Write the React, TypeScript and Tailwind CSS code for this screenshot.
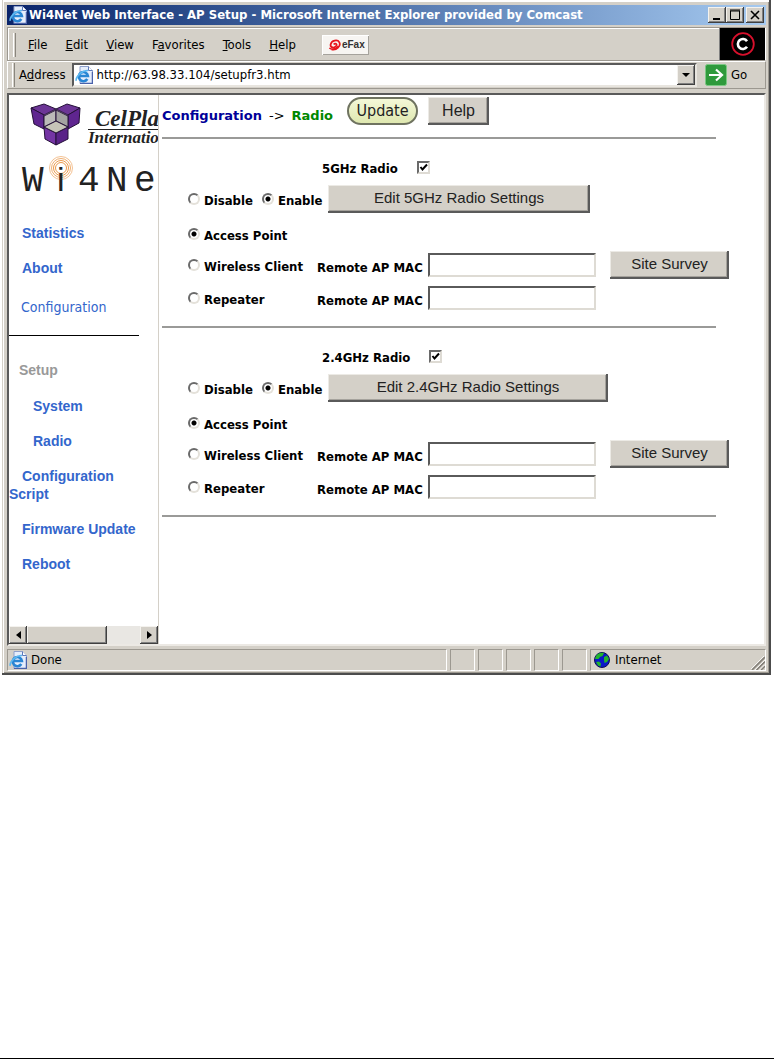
import React, { useState } from 'react'

const raised = 'bg-[#d4d0c8] shadow-[inset_-1px_-1px_0_#404040,inset_1px_1px_0_#f4f2ee,inset_-2px_-2px_0_#808080]';
const winButton = 'bg-[#d4d0c8] text-[#222] shadow-[inset_-2px_-2px_0_#5a5a5a,inset_1px_1px_0_#eceae5,inset_-3px_-3px_0_#a5a29c]';
const sunken = 'border border-t-[#9c9890] border-l-[#9c9890] border-b-white border-r-white';
const textBox = 'h-6 w-[168px] border-2 border-t-[#5a5a5a] border-l-[#5a5a5a] border-b-[#dedbd4] border-r-[#dedbd4] bg-white px-1 text-[13px] outline-none';

function PageIcon({ size }: { size: string }) {
  return (
    <svg viewBox="0 0 18 18" className={size}>
      <path d="M5 .5h8.500l4 4v13H5z" fill="#e6eefc" stroke="#8ea0cc" />
      <path d="M13.500.5v4h4" fill="#fff" stroke="#5d78b8" />
      <path d="M5 17.500h12.500V6" fill="none" stroke="#4a62aa" strokeWidth="1.500" />
      <path d="M12.300 13a4.600 4.600 0 1 1 .6-3H5" fill="none" stroke="#2a86d4" strokeWidth="2.600" />
      <path d="M1.200 14.800C.3 11 7 4.300 13 4.600" fill="none" stroke="#5cb8f0" strokeWidth="1.500" />
    </svg>
  )
}

function Grip() {
  return <div className="h-[24px] w-[3px] shrink-0 border-l border-r border-l-white border-r-[#8a867e]" />
}

function TitleBar() {
  return (
    <div className="flex h-5 items-center bg-linear-to-r from-[#0a246a] to-[#a6caf0] pl-0.5 pr-0.5">
      <PageIcon size="h-[18px] w-[18px] shrink-0" />
      <h1 className="ml-0.5 grow whitespace-nowrap text-[13px] font-bold text-white">
        Wi4Net Web Interface - AP Setup - Microsoft Internet Explorer provided by Comcast
      </h1>
      <button aria-label="Minimize" className={`flex h-4 w-[18px] items-center justify-center ${raised}`}>
        <svg viewBox="0 0 18 16" className="h-4 w-[18px]"><path d="M5 12h7" stroke="#000" strokeWidth="2" /></svg>
      </button>
      <button aria-label="Maximize" className={`flex h-4 w-[18px] items-center justify-center ${raised}`}>
        <svg viewBox="0 0 18 16" className="h-4 w-[18px]"><path d="M4 3h10M4 4h10M4.500 4v8.500h9V4" fill="none" stroke="#000" /></svg>
      </button>
      <button aria-label="Close" className={`ml-0.5 flex h-4 w-[18px] items-center justify-center ${raised}`}>
        <svg viewBox="0 0 18 16" className="h-4 w-[18px]"><path d="M5 4l8 8M13 4l-8 8" stroke="#000" strokeWidth="1.600" /></svg>
      </button>
    </div>
  )
}

function MenuBar() {
  return (
    <div className="mt-0.5 flex border border-[#9c9890] border-r-white">
      <div className="flex h-8 grow items-center gap-[18px] border-t border-l border-white pl-1 text-[13px]">
        <Grip />
        <button className="-ml-1.5"><u>F</u>ile</button>
        <button><u>E</u>dit</button>
        <button><u>V</u>iew</button>
        <button>F<u>a</u>vorites</button>
        <button><u>T</u>ools</button>
        <button><u>H</u>elp</button>
        <button aria-label="eFax" className="ml-2 flex h-5 w-[47px] items-center bg-[#f7f5f2] pl-1.5 shadow-[inset_1px_1px_0_#fff,inset_-1px_-1px_0_#a5a29c]">
          <svg viewBox="0 0 16 14" className="h-[13px] w-[14px] shrink-0">
            <path d="M4 12.500C10 14 15 8.500 13 4.500 11 1 4 2 3 7c-.6 4 4.500 4.500 6.500 1.500 1.300-2.200-1.500-3.200-3-1.500" fill="none" stroke="#e8141c" strokeWidth="2" />
            <path d="M1.500 11c3 2.500 8 1 10-2" fill="none" stroke="#e8141c" strokeWidth="1.600" />
          </svg>
          <span className="font-['Liberation_Sans',sans-serif] text-[10px] font-bold text-[#333]">eFax</span>
        </button>
      </div>
      <div className="flex w-[46px] items-center justify-center border-l border-[#808080] bg-black">
        <svg viewBox="0 0 24 24" className="h-6 w-6">
          <circle cx="12" cy="12" r="10.800" fill="none" stroke="#d8102c" strokeWidth="1.800" />
          <path d="M16 9.200a5 5 0 1 0 0 5.600" fill="none" stroke="#fff" strokeWidth="2.600" />
        </svg>
      </div>
    </div>
  )
}

function AddressBar() {
  const [url, setUrl] = useState('http://63.98.33.104/setupfr3.htm');

  return (
    <div className="flex h-7 items-center border border-t-white border-l-white border-b-[#9c9890] border-r-[#9c9890] pl-1 text-[13px]">
      <Grip />
      <label htmlFor="address" className="ml-1 mr-1.5">A<u>d</u>dress</label>
      <div className="flex h-6 grow items-center border-2 border-t-[#5a5a5a] border-l-[#5a5a5a] border-b-[#e8e5df] border-r-[#e8e5df] bg-white pl-px">
        <PageIcon size="h-[18px] w-[18px] shrink-0" />
        <input id="address" value={url} onChange={(e) => setUrl(e.target.value)} className="ml-1 min-w-0 grow outline-none" />
        <button aria-label="Show addresses" className={`flex h-5 w-[18px] items-center justify-center ${raised}`}>
          <svg viewBox="0 0 8 4" className="h-1 w-2"><path d="M0 0h8L4 4z" /></svg>
        </button>
      </div>
      <button className="ml-2 flex w-[60px] items-center gap-1">
        <svg viewBox="0 0 22 22" className="h-[22px] w-[22px]">
          <rect x=".5" y=".5" width="21" height="21" rx="2" fill="#2f9a3c" stroke="#7cc884" />
          <path d="M4 11h12M11 5.500l6 5.500-6 5.500" fill="none" stroke="#fff" strokeWidth="2.200" />
        </svg>
        Go
      </button>
    </div>
  )
}

function Logos() {
  return (
    <svg viewBox="0 0 149 105" className="h-[105px] w-[149px] shrink-0">
      <g stroke="#241038" strokeWidth="1" strokeLinejoin="round">
        <path d="M22 13l13-4 12 5-12 6z" fill="#6c3596" />
        <path d="M22 13l13 7v14l-10-5z" fill="#5f2590" />
        <path d="M71 13l-13-4-11 5 12 6z" fill="#6c3596" />
        <path d="M71 13l-12 7v14l11-6z" fill="#5f2590" />
        <path d="M35 32l12 6v12l-11-6z" fill="#7434a4" />
        <path d="M59 32l-12 6v12l12-6z" fill="#5a2288" />
        <path d="M47 15l-12 6v11l12-6z" fill="#bbbab8" />
        <path d="M47 15l12 6v11l-12-6z" fill="#a4a3a2" />
        <path d="M47 26l-12 6 12 6 12-6z" fill="#c6c4b8" />
      </g>
      <g fill="#222" fontFamily="Liberation Serif, serif" fontStyle="italic" fontWeight="bold">
        <text x="86" y="31" fontSize="23">CelPlan</text>
        <text x="79" y="48" fontSize="17">International</text>
      </g>
      <path d="M79 34.500h70" stroke="#222" />
      <g fill="none" stroke="#eb9a4c">
        <circle cx="52" cy="73" r="11.500" strokeWidth="1" opacity=".6" />
        <circle cx="52" cy="73" r="9.500" strokeWidth="1" opacity=".8" />
        <circle cx="52" cy="73" r="7.500" strokeWidth="1" />
        <circle cx="52" cy="73" r="5.500" strokeWidth="1" fill="#fff" />
      </g>
      <g fill="#222" fontFamily="Liberation Mono, monospace" fontSize="36">
        <text x="13" y="96">W</text>
        <text x="48" y="96" fontFamily="Liberation Sans, sans-serif" fontSize="34">i</text>
        <text x="69" y="96">4</text>
        <text x="97" y="96">N</text>
        <text x="125" y="96">e</text>
      </g>
    </svg>
  )
}

function Sidebar() {
  return (
    <aside className="flex w-[150px] shrink-0 flex-col overflow-hidden border-r border-[#d4d0c8]">
      <Logos />
      <nav className="mt-6 flex flex-col gap-[17px] pb-[53px] font-['Liberation_Sans',sans-serif] text-[14px] leading-[18px] font-bold text-[#3366cc]">
        <a href="#statistics" className="pl-[13px]">Statistics</a>
        <a href="#about" className="pl-[13px]">About</a>
        <a href="#configuration" className="mt-1 pl-3 font-['DejaVu_Sans_Condensed','DejaVu_Sans',sans-serif] font-normal">Configuration</a>
        <hr className="mt-0.5 mr-[19px] border-black" />
        <span className="mt-2 pl-2.5 text-[#999]">Setup</span>
        <a href="#system" className="mt-px pl-6">System</a>
        <a href="#radio" className="pl-6">Radio</a>
        <a href="#script" className="pr-9 indent-[13px]">Configuration Script</a>
        <a href="#firmware" className="pl-[13px]">Firmware Update</a>
        <a href="#reboot" className="pl-[13px]">Reboot</a>
      </nav>
      <div className="mt-auto flex h-[18px] bg-[#e9e7e3]">
        <button aria-label="Scroll left" className={`flex w-[18px] items-center justify-center ${raised}`}>
          <svg viewBox="0 0 5 8" className="h-2 w-[5px]"><path d="M5 0v8L0 4z" /></svg>
        </button>
        <div className={`w-20 ${raised}`} />
        <button aria-label="Scroll right" className={`ml-auto flex w-[18px] items-center justify-center ${raised}`}>
          <svg viewBox="0 0 5 8" className="h-2 w-[5px]"><path d="M0 0v8l5-4z" /></svg>
        </button>
      </div>
    </aside>
  )
}

interface RadioOptionProps {
  name: string;
  label: string;
  checked?: boolean;
}

function RadioOption({ name, label, checked }: RadioOptionProps) {
  return (
    <label className="flex items-center gap-1 whitespace-nowrap">
      <input type="radio" name={name} defaultChecked={checked} className="h-3 w-3 appearance-none rounded-full border-2 border-t-[#6a6a6a] border-l-[#6a6a6a] border-b-[#e4e1da] border-r-[#e4e1da] bg-white checked:bg-[radial-gradient(circle,#000_2px,#fff_3px)]" />
      <span className="pt-1">{label}</span>
    </label>
  )
}

interface RadioSectionProps {
  id: string;
  band: string;
  editClass: string;
}

function RadioSection({ id, band, editClass }: RadioSectionProps) {
  return (
    <section className="pt-3.5 pb-3.5 pl-7">
      <div className="mb-1 flex h-7 items-center gap-[19px] pl-[134px]">
        <label htmlFor={`${id}-on`} className="pt-1">{band} Radio</label>
        <span className="relative flex">
          <input id={`${id}-on`} type="checkbox" defaultChecked className="peer h-[13px] w-[13px] appearance-none border-2 border-t-[#6a6a6a] border-l-[#6a6a6a] border-b-[#dedbd4] border-r-[#dedbd4] bg-white" />
          <svg viewBox="0 0 13 13" className="pointer-events-none absolute inset-0 hidden h-[13px] w-[13px] peer-checked:block">
            <path d="M3.500 6l2 2.500 4.500-5" fill="none" stroke="#000" strokeWidth="2" />
          </svg>
        </span>
      </div>
      <div className="flex h-7 items-center">
        <div className="flex w-[140px] gap-[9px]">
          <RadioOption name={`${id}-state`} label="Disable" />
          <RadioOption name={`${id}-state`} label="Enable" checked />
        </div>
        <button className={`h-7 pb-0.5 font-['Liberation_Sans',sans-serif] text-[15px] font-normal ${editClass} ${winButton}`}>Edit {band} Radio Settings</button>
      </div>
      <div className="mt-1.5 flex h-[30px] items-center">
        <RadioOption name={`${id}-mode`} label="Access Point" checked />
      </div>
      <div className="mt-0.5 flex h-7 items-center">
        <div className="w-[129px]"><RadioOption name={`${id}-mode`} label="Wireless Client" /></div>
        <label htmlFor={`${id}-client-mac`} className="w-[111px] pt-1.5 whitespace-nowrap">Remote AP MAC</label>
        <input id={`${id}-client-mac`} className={textBox} />
        <button className={`ml-3.5 h-7 w-[119px] pb-0.5 font-['Liberation_Sans',sans-serif] text-[15px] font-normal ${winButton}`}>Site Survey</button>
      </div>
      <div className="mt-[5px] flex h-7 items-center">
        <div className="w-[129px]"><RadioOption name={`${id}-mode`} label="Repeater" /></div>
        <label htmlFor={`${id}-repeater-mac`} className="w-[111px] pt-1.5 whitespace-nowrap">Remote AP MAC</label>
        <input id={`${id}-repeater-mac`} className={textBox} />
      </div>
    </section>
  )
}

function Divider() {
  return <hr className="ml-0.5 mr-12 h-0.5 border-0 bg-[#9a9a98]" />
}

function RadioPage() {
  return (
    <main className="min-w-0 grow pl-px text-[13px] leading-4 font-bold">
      <header className="flex h-[42px] items-center pb-2.5 pl-0.5">
        <h2 className="flex gap-[7px] pt-2.5 font-['DejaVu_Sans',sans-serif] whitespace-nowrap">
          <span className="text-[#000099]">Configuration</span>
          <span className="font-normal">-&gt;</span>
          <span className="text-[#008800]">Radio</span>
        </h2>
        <button className="ml-3.5 h-7 w-[71px] rounded-full border-2 border-[#6f7360] bg-linear-to-b from-[#f4f8d8] to-[#dfe8b0] text-[16px] font-normal text-[#222]">Update</button>
        <button className={`ml-2.5 h-7 w-[61px] font-['Liberation_Sans',sans-serif] text-[16px] font-normal ${winButton}`}>Help</button>
      </header>
      <Divider />
      <RadioSection id="radio5" band="5GHz" editClass="w-[262px]" />
      <Divider />
      <RadioSection id="radio24" band="2.4GHz" editClass="w-[280px]" />
      <Divider />
    </main>
  )
}

function StatusBar() {
  return (
    <footer className="mt-[3px] flex h-[22px] gap-[3px] text-[13px]">
      <div className={`flex grow items-center gap-1 pl-px ${sunken}`}>
        <PageIcon size="h-[18px] w-[18px]" />
        Done
      </div>
      {[1, 2, 3, 4, 5].map((n) => <div key={n} className={`w-[25px] ${sunken}`} />)}
      <div className={`flex w-[176px] items-center gap-[5px] pl-[3px] ${sunken}`}>
        <svg viewBox="0 0 16 16" className="h-4 w-4">
          <circle cx="8" cy="8" r="7.500" fill="#0a18c8" stroke="#101050" />
          <path d="M2 4c2-3 5-3.500 8-3L8.500 4 6 5 4.500 7 1 7zM10 5l3-1.500L15 7l-2 3-2.500 1-.5-3zM2 10l3-.5 2 2L6.500 14.500 4 13.500z" fill="#22b52c" />
        </svg>
        <span className="grow">Internet</span>
        <svg viewBox="0 0 14 14" className="h-3.5 w-3.5 self-end">
          <path d="M1 14L14 1M5.500 14L14 5.500M10 14l4-4" stroke="#85817a" strokeWidth="1.600" />
          <path d="M0 13L13 0M4 14L14 4M8.500 14L14 8.500" stroke="#fff" strokeWidth=".8" />
        </svg>
      </div>
    </footer>
  )
}

export default function App() {
  return (
    <div className="flex min-h-screen flex-col border-b border-black bg-white font-['DejaVu_Sans_Condensed','DejaVu_Sans',sans-serif] text-black">
      <div className="mr-[3px] ml-0.5 bg-[#d4d0c8] p-[5px] pb-1 shadow-[inset_-2px_-2px_0_#4c4c4c,inset_1px_0_0_#d4d0c8,inset_2px_2px_0_#fff,inset_-3px_-3px_0_#9c9890]">
        <TitleBar />
        <MenuBar />
        <AddressBar />
        <div className="mt-1 flex border-2 border-t-[#5a5a5a] border-l-[#5a5a5a] border-b-[#ece9e4] border-r-[#ece9e4] bg-white">
          <Sidebar />
          <RadioPage />
        </div>
        <StatusBar />
      </div>
    </div>
  )
}
